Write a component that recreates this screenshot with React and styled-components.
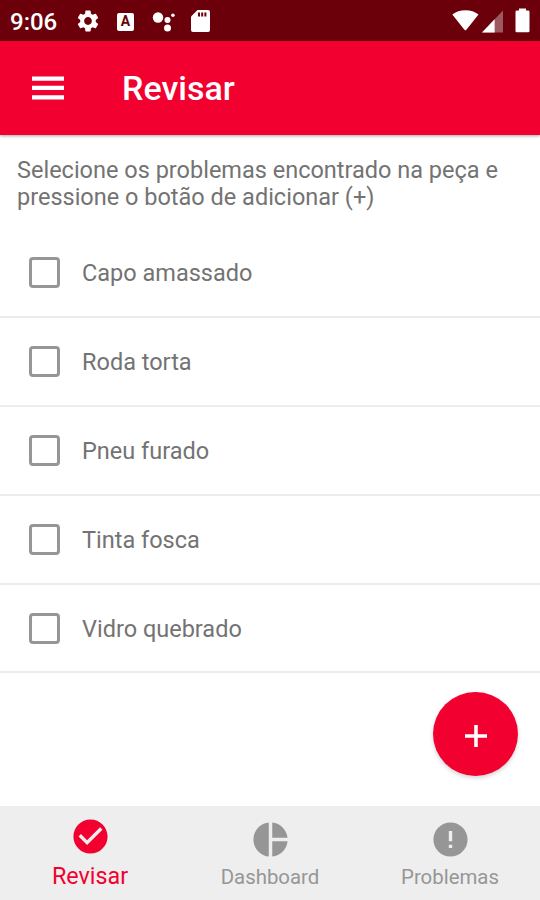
import React, { useState } from 'react'
import styled, { createGlobalStyle } from 'styled-components';
import { MdSettings, MdCheckCircle, MdPieChart, MdError } from 'react-icons/md';

const problems = ['Capo amassado', 'Roda torta', 'Pneu furado', 'Tinta fosca', 'Vidro quebrado'];

const App = () => {
    const [selected, setSelected] = useState([]);

    const toggle = (name) => {
        setSelected(selected.includes(name) ? selected.filter((s) => s !== name) : [...selected, name]);
    }

    return (
        <Screen>
            <GlobalStyle />
            <StatusBar>
                <Clock>9:06</Clock>
                <Notifications>
                    <MdSettings size={26} />
                    <KeyboardBadge>A</KeyboardBadge>
                    <svg width="26" height="24" viewBox="0 0 26 24" fill="#fff">
                        <circle cx="6" cy="8.5" r="5.2" />
                        <circle cx="15.5" cy="11" r="3" />
                        <circle cx="20.9" cy="6.2" r="1.8" />
                        <circle cx="15.5" cy="19" r="3.5" />
                    </svg>
                    <svg width="19" height="22" viewBox="0 0 19 22">
                        <path d="M6.500 0H17q2 0 2 2v18q0 2-2 2H2q-2 0-2-2V6.500Z" fill="#fff" />
                        <path d="M7 2.500h2v4H7zM10.200 2.500h2v4h-2zM13.400 2.500h2v4h-2z" fill="#6b000b" />
                    </svg>
                </Notifications>
                <SystemIcons>
                    <svg width="27" height="24" viewBox="0 0 27 24" fill="#fff">
                        <path d="M0.3 5.5C7-0.3 20-0.3 26.5 5.5L14.6 20.6Q13.4 22.2 12.2 20.6Z" />
                    </svg>
                    <svg width="21" height="24" viewBox="0 0 21 24">
                        <path d="M21 1.5v22H0Z" fill="#fff" fillOpacity=".35" />
                        <path d="M12.6 10.3V23.5H0Z" fill="#fff" />
                    </svg>
                    <svg width="15" height="26" viewBox="0 0 15 26" fill="#fff">
                        <path d="M4 1.5h7v2h2.200q1.300 0 1.300 1.300V24q0 1.300-1.300 1.300H1.800Q.5 25.300.5 24V4.800Q.5 3.500 1.800 3.500H4Z" />
                    </svg>
                </SystemIcons>
            </StatusBar>
            <AppBar>
                <MenuButton aria-label="Menu">
                    <svg width="32" height="24" viewBox="0 0 32 24" fill="#fff">
                        <path d="M0 .5h32v4.200H0zM0 9.800h32v4.200H0zM0 19.200h32v4.200H0z" />
                    </svg>
                </MenuButton>
                <Title>Revisar</Title>
            </AppBar>
            <Content>
                <Intro>Selecione os problemas encontrado na peça e<br />pressione o botão de adicionar (+)</Intro>
                {problems.map((name) => (
                    <Row key={name} onClick={() => toggle(name)}>
                        <Box $checked={selected.includes(name)} />
                        <span>{name}</span>
                    </Row>
                ))}
            </Content>
            <Fab aria-label="Adicionar">
                <svg width="22" height="22" viewBox="0 0 22 22" fill="#fff">
                    <path d="M9.200 0h3.600v9.200H22v3.600h-9.200V22H9.200v-9.200H0V9.200h9.200z" />
                </svg>
            </Fab>
            <TabBar>
                <Tab $active>
                    <MdCheckCircle size={41} />
                    <span>Revisar</span>
                </Tab>
                <Tab>
                    <MdPieChart size={41} />
                    <span>Dashboard</span>
                </Tab>
                <Tab>
                    <MdError size={41} />
                    <span>Problemas</span>
                </Tab>
            </TabBar>
        </Screen>
    )
}

export default App;

const GlobalStyle = createGlobalStyle`
    * {
        box-sizing: border-box;
    }

    body {
        margin: 0;
        font-family: Roboto, sans-serif;
    }

    svg {
        display: block;
        flex-shrink: 0;
    }
`

const Screen = styled.div`
    position: relative;
    display: flex;
    flex-direction: column;
    width: 540px;
    height: 900px;
    overflow: hidden;
    background: #fff;
`

const StatusBar = styled.div`
    display: flex;
    align-items: center;
    height: 41px;
    padding: 0 10px;
    background: #6b000b;
    color: #fff;
`

const Clock = styled.span`
    width: 65px;
    font-size: 24px;
    font-weight: 500;
    line-height: 28px;
    padding-top: 2px;
`

const Notifications = styled.div`
    display: flex;
    align-items: center;

    svg:nth-of-type(2) {
        margin-left: 18px;
    }

    svg:nth-of-type(3) {
        margin-left: 13px;
    }
`

const KeyboardBadge = styled.span`
    width: 17px;
    height: 18px;
    margin: 2px 0 0 16px;
    border-radius: 2px;
    background: #fff;
    color: #6b000b;
    font-size: 14px;
    font-weight: 700;
    line-height: 17px;
    text-align: center;
`

const SystemIcons = styled.div`
    display: flex;
    align-items: center;
    margin-left: auto;

    svg:nth-of-type(2) {
        margin-left: 3px;
    }

    svg:nth-of-type(3) {
        margin: 0 0 2px 12px;
    }
`

const AppBar = styled.header`
    display: flex;
    align-items: center;
    flex-shrink: 0;
    height: 94px;
    padding-left: 32px;
    background: #f20030;
    box-shadow: 0 1px 3px rgba(0, 0, 0, .35);
    z-index: 1;
`

const MenuButton = styled.button`
    padding: 0;
    border: none;
    background: none;
`

const Title = styled.h1`
    margin: 0 0 0 58px;
    color: #fff;
    font-size: 34px;
    font-weight: 500;
    line-height: 40px;
`

const Content = styled.main`
    flex: 1;
    color: #737373;
    font-size: 23.5px;
`

const Intro = styled.p`
    height: 94px;
    margin: 0;
    padding: 22px 17px 0;
    line-height: 27px;
    white-space: nowrap;
`

const Row = styled.div`
    display: flex;
    align-items: center;
    gap: 22px;
    height: 88.9px;
    padding-left: 29px;
    border-bottom: 2px solid #ececec;
    line-height: 28px;

    span {
        padding-top: 2px;
    }
`

const Box = styled.div`
    width: 31px;
    height: 31px;
    border: 3px solid #969696;
    border-radius: 4px;
    background: ${({ $checked }) => ($checked ? '#f20030' : 'transparent')};
`

const Fab = styled.button`
    position: absolute;
    right: 22px;
    bottom: 124px;
    display: flex;
    align-items: center;
    justify-content: center;
    width: 85px;
    height: 84px;
    padding: 4px 0 0;
    border: none;
    border-radius: 50%;
    background: #f20030;
    box-shadow: 0 2px 4px rgba(0, 0, 0, .18);
`

const TabBar = styled.nav`
    display: grid;
    grid-template-columns: repeat(3, 1fr);
    height: 94px;
    background: #eee;
`

const Tab = styled.div`
    display: flex;
    flex-direction: column;
    align-items: center;
    padding-top: ${({ $active }) => ($active ? '10px' : '13px')};
    color: ${({ $active }) => ($active ? '#f20030' : '#969696')};
    font-size: ${({ $active }) => ($active ? '23.3px' : '20.4px')};

    span {
        margin-top: ${({ $active }) => ($active ? '6px' : '4px')};
        line-height: 26px;
    }
`
